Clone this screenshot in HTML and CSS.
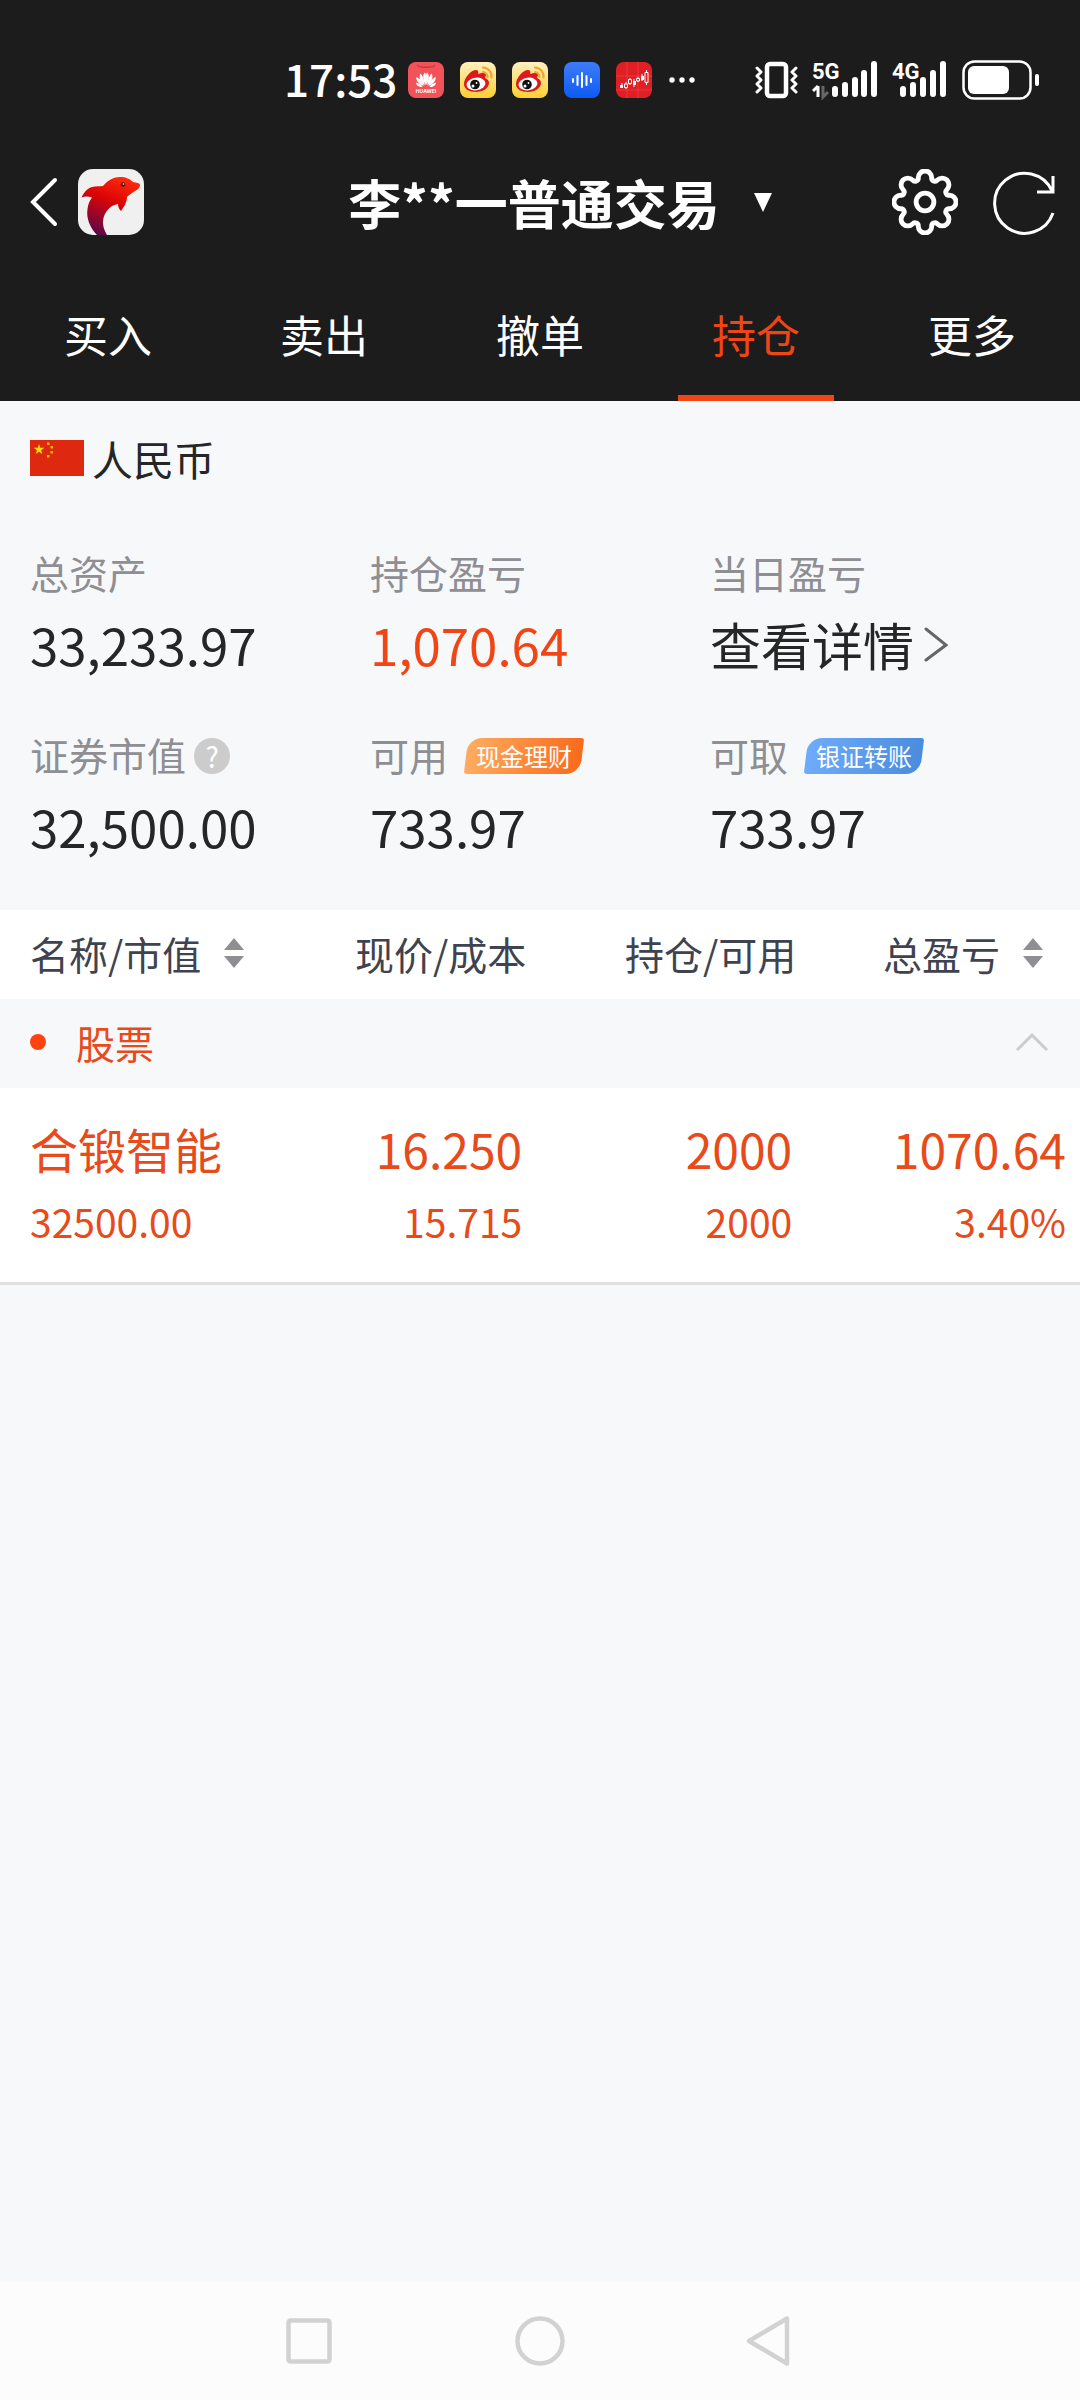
FILE: index.html
```html
<!DOCTYPE html>
<html lang="zh-CN">
<head>
<meta charset="UTF-8">
<meta name="viewport" content="width=device-width, initial-scale=1.0">
<title>持仓</title>
<link rel="stylesheet" href="styles.css">
</head>

<body>

<!-- Shared shapes -->
<svg class="defs" width="0" height="0" aria-hidden="true">
  <defs>
    <linearGradient id="weiboBg" x1="0" y1="0" x2="0" y2="1"><stop offset="0" stop-color="#fff0c0"/><stop offset="1" stop-color="#ffd030"/></linearGradient>
    <linearGradient id="blueBg" x1="0" y1="0" x2="0" y2="1"><stop offset="0" stop-color="#3d7cf8"/><stop offset="1" stop-color="#0d5bf5"/></linearGradient>
    <linearGradient id="dolphin" x1="0.7" y1="0" x2="0.3" y2="1"><stop offset="0" stop-color="#ff2a0c"/><stop offset="0.4" stop-color="#dc0505"/><stop offset="1" stop-color="#5c0748"/></linearGradient>
    <symbol id="weibo" viewBox="0 0 36 36">
      <rect width="36" height="36" rx="8" fill="url(#weiboBg)"/>
      <path d="M4 22C4 16 11 8 16 8c2 0 3 2 2 4 3-1 8-2 8 1 0 1-1 2-1 3 3 1 4 3 4 5 0 5-6 9-13 9S4 27 4 22Z" fill="#dc1a1c"/>
      <ellipse cx="16" cy="22" rx="9.5" ry="6.3" fill="#fff" transform="rotate(-8 16 22)"/>
      <circle cx="15" cy="22.5" r="4.8" fill="#111"/>
      <circle cx="13" cy="24" r="1.5" fill="#fff"/>
      <circle cx="16.5" cy="21" r="0.9" fill="#fff"/>
      <path d="M23 5.500a9 9 0 0 1 8.500 10M23 10a5 5 0 0 1 4.500 5" fill="none" stroke="#f0a52c" stroke-width="2.200" stroke-linecap="round"/>
    </symbol>
    <symbol id="sort" viewBox="0 0 22 32">
      <path d="M11 1 21 13H1ZM11 31 21 19H1Z" fill="#8e8e93"/>
    </symbol>
  </defs>
</svg>

<div class="top">
  <div class="status-bar">
    <span class="time">17:53</span>
    <div class="notices">
      <svg width="36" height="36" viewBox="0 0 36 36">
        <rect width="36" height="36" rx="8" fill="#f2525a"/>
        <path d="M9 3c2 3 16 3 18 0" fill="none" stroke="#c9343c" stroke-width="1.300"/>
        <g fill="#fff">
          <path d="M17.600 23C14.500 18 14.500 12 17 10.500 18.500 13 18.300 18 17.600 23Z"/>
          <path d="M16.500 23.500C12 20 10.500 14 12.500 11.500 15 14 16.500 19 16.500 23.500Z"/>
          <path d="M15.500 24C11 22.500 7.500 18 8.500 15 12 16.500 15 20.500 15.500 24Z"/>
          <path d="M14.500 25C10 25.500 8 22.500 8 20.500 11 21 13.500 23 14.500 25Z"/>
          <path d="M18.400 23C21.500 18 21.500 12 19 10.500 17.500 13 17.700 18 18.400 23Z"/>
          <path d="M19.500 23.500C24 20 25.500 14 23.500 11.500 21 14 19.500 19 19.500 23.500Z"/>
          <path d="M20.500 24C25 22.500 28.500 18 27.500 15 24 16.500 21 20.500 20.500 24Z"/>
          <path d="M21.500 25C26 25.500 28 22.500 28 20.500 25 21 22.500 23 21.500 25Z"/>
        </g>
        <text x="18" y="31" class="huawei">HUAWEI</text>
      </svg>
      <svg width="36" height="36"><use href="#weibo"/></svg>
      <svg width="36" height="36"><use href="#weibo"/></svg>
      <svg width="36" height="36" viewBox="0 0 36 36">
        <rect width="36" height="36" rx="8" fill="url(#blueBg)"/>
        <path d="M9 17v3M13.500 14v9M18 11v14M22.500 14v9M27 17v3" stroke="#fff" stroke-width="2" stroke-linecap="round"/>
      </svg>
      <svg width="36" height="36" viewBox="0 0 36 36">
        <rect width="36" height="36" rx="8" fill="#e01f24"/>
        <path d="M11 0v36M22 0v36M0 14h36M0 28h36" stroke="#ee4a4a" stroke-width="0.600"/>
        <path d="M6 21v5M10 20v7M14 16v7M18 17v8M22 15v5M26 12v7M30.500 8v15" stroke="#fff" stroke-width="1"/>
        <path d="M4 23h3v3H4ZM17 19h3v4h-3ZM25 14h3v4h-3Z" fill="#fff"/>
        <path d="M8.500 22h3v3.500h-3ZM12.500 17.500h3v4h-3ZM20.500 16.500h3v2.500h-3ZM29 10.500h3v10h-3Z" fill="#e01f24" stroke="#fff"/>
      </svg>
      <svg width="28" height="36" viewBox="0 0 28 36" fill="#fff"><circle cx="4" cy="18" r="2.700"/><circle cx="14" cy="18" r="2.700"/><circle cx="24" cy="18" r="2.700"/></svg>
    </div>
    <div class="signals">
      <svg width="46" height="40" viewBox="0 0 46 40" fill="none" stroke="#fff">
        <rect x="13" y="4" width="19" height="32" rx="3" stroke-width="4.500"/>
        <path d="M3 8l4 4-4 4 4 4-4 4 4 4-4 4M42 8l-4 4 4 4-4 4 4 4-4 4 4 4" stroke-width="3" stroke-linecap="round" stroke-linejoin="round"/>
      </svg>
      <svg width="68" height="40" viewBox="0 0 68 40">
        <text x="0" y="19" class="net">5G</text>
        <path d="M6 26v11M6 26l-5 5" stroke="#fff" stroke-width="3" fill="none"/>
        <path d="M11 26v11l5-5" stroke="#666" stroke-width="3" fill="none"/>
        <path d="M23 29v5M33 25v9M43 20v14M52 13v21M62 4v30" stroke="#fff" stroke-width="6" stroke-linecap="round"/>
      </svg>
      <svg width="58" height="40" viewBox="0 0 58 40">
        <text x="0" y="19" class="net">4G</text>
        <path d="M11 29v5M21 25v9M31 20v14M41 13v21M51 4v30" stroke="#fff" stroke-width="6" stroke-linecap="round"/>
      </svg>
      <svg width="78" height="40" viewBox="0 0 78 40">
        <rect x="1.500" y="1.500" width="67" height="37" rx="11" fill="none" stroke="#fff" stroke-width="2.500"/>
        <rect x="6" y="6" width="41" height="28" rx="6" fill="#fff"/>
        <rect x="73" y="14" width="4" height="12" rx="2" fill="#fff"/>
      </svg>
    </div>
  </div>

  <header class="nav">
    <div class="nav-left">
      <button class="icon-btn" aria-label="返回">
        <svg width="28" height="50" viewBox="0 0 28 50" fill="none" stroke="#fff" stroke-width="4" stroke-linecap="round"><path d="M25 3 3 25 25 47"/></svg>
      </button>
      <svg width="66" height="66" viewBox="0 0 66 66">
        <rect width="66" height="66" rx="15" fill="#f0f0f0"/>
        <path d="M19 66C12 59 8 49 9.500 40 10 35 12 31 14 28.500 10 27 7 27 3.500 28.500 6 23 10 19 14 18 18 17 22 17.500 25 17 30 11 36 8 42 8c6 0 10 2 13 5 3 .500 7 1 7 3 0 3-3 5-5 6-3 2-6 4-8 6 0 5-3 10-6 14-2-2-3-4-3-7C32 36 27 43 25.500 49 24 55 26 61 29 66Z" fill="url(#dolphin)"/>
        <circle cx="45" cy="15.500" r="2.300" fill="#501014"/><circle cx="45.500" cy="15" r="0.800" fill="#fff"/>
      </svg>
    </div>
    <button class="title">李**一普通交易
      <svg width="18" height="20" viewBox="0 0 18 20" fill="#fff"><path d="M0 1h18L9 20Z"/></svg>
    </button>
    <div class="nav-right">
      <button class="icon-btn" aria-label="设置">
        <svg width="66" height="66" viewBox="-30.500 -30.500 61 61" fill="none" stroke="#fff" stroke-width="4.500">
          <path d="M-6.200-22.500A6.200 6.200 0 0 1 6.200-22.500A3 3 0 0 0 11.500-20.300A6.200 6.200 0 0 1 20.300-11.500A3 3 0 0 0 22.500-6.200A6.200 6.200 0 0 1 22.500 6.200A3 3 0 0 0 20.300 11.500A6.200 6.200 0 0 1 11.500 20.300A3 3 0 0 0 6.200 22.500A6.200 6.200 0 0 1-6.200 22.500A3 3 0 0 0-11.500 20.300A6.200 6.200 0 0 1-20.300 11.500A3 3 0 0 0-22.500 6.200A6.200 6.200 0 0 1-22.500-6.200A3 3 0 0 0-20.300-11.500A6.200 6.200 0 0 1-11.500-20.300A3 3 0 0 0-6.200-22.500Z"/>
          <circle r="8.200"/>
        </svg>
      </button>
      <button class="icon-btn" aria-label="刷新">
        <svg width="64" height="66" viewBox="0 0 64 66" fill="none" stroke="#fff" stroke-width="3">
          <path d="M61 44A30 30 0 1 1 60 22M45 23h16V7"/>
        </svg>
      </button>
    </div>
  </header>

  <nav class="tabs">
    <a href="#">买入</a>
    <a href="#">卖出</a>
    <a href="#">撤单</a>
    <a href="#" class="active">持仓</a>
    <a href="#">更多</a>
  </nav>
</div>

<main>
  <div class="currency">
    <svg width="54" height="36" viewBox="0 0 54 36">
      <rect width="54" height="36" fill="#de2910"/>
      <path d="M9 4l1.300 3.800h4L11.100 10.200l1.200 3.800L9 11.700 5.700 14l1.200-3.800L3.700 7.800h4Z" fill="#ffde00"/>
      <path d="M17 2.500h2.500V5H17ZM20.500 6H23v2.500h-2.500ZM20.500 11H23v2.500h-2.500ZM17 15h2.500v2.500H17Z" fill="#e8b800"/>
    </svg>
    <span>人民币</span>
  </div>

  <section class="assets">
    <div class="asset">
      <div class="label">总资产</div>
      <div class="value">33,233.97</div>
    </div>
    <div class="asset">
      <div class="label">持仓盈亏</div>
      <div class="value up">1,070.64</div>
    </div>
    <div class="asset">
      <div class="label">当日盈亏</div>
      <a href="#" class="value">查看详情
        <svg width="24" height="36" viewBox="0 0 24 36" fill="none" stroke="#666" stroke-width="3" stroke-linecap="round"><path d="M2 3 22 19 2 34"/></svg>
      </a>
    </div>
    <div class="asset">
      <div class="label">证券市值 <button class="help" aria-label="说明">?</button></div>
      <div class="value">32,500.00</div>
    </div>
    <div class="asset">
      <div class="label">可用 <button class="badge orange">现金理财</button></div>
      <div class="value">733.97</div>
    </div>
    <div class="asset">
      <div class="label">可取 <button class="badge blue">银证转账</button></div>
      <div class="value">733.97</div>
    </div>
  </section>

  <table class="holdings">
    <colgroup><col class="c-name"><col class="c-price"><col class="c-count"><col></colgroup>
    <thead>
      <tr>
        <th><button class="sort">名称/市值 <svg width="22" height="32"><use href="#sort"/></svg></button></th>
        <th>现价/成本</th>
        <th>持仓/可用</th>
        <th><button class="sort">总盈亏 <svg width="22" height="32"><use href="#sort"/></svg></button></th>
      </tr>
    </thead>
    <tbody>
      <tr class="group">
        <td colspan="4">
          <button class="group-btn">
            <span class="dot"></span>股票
            <svg width="32" height="20" viewBox="0 0 32 20" fill="none" stroke="#ccc" stroke-width="3"><path d="M1 18 16 3 31 18"/></svg>
          </button>
        </td>
      </tr>
      <tr class="stock">
        <td><div class="main-line">合锻智能</div><div class="sub-line">32500.00</div></td>
        <td><div class="main-line">16.250</div><div class="sub-line">15.715</div></td>
        <td><div class="main-line">2000</div><div class="sub-line">2000</div></td>
        <td><div class="main-line">1070.64</div><div class="sub-line">3.40%</div></td>
      </tr>
    </tbody>
  </table>
</main>

<footer class="system-nav">
  <button class="icon-btn" aria-label="最近任务">
    <svg width="50" height="52" viewBox="0 0 50 52" fill="none" stroke="#d2d2d2" stroke-width="4.500"><rect x="4.500" y="5.500" width="41" height="41" rx="2"/></svg>
  </button>
  <button class="icon-btn" aria-label="主页">
    <svg width="50" height="52" viewBox="0 0 50 52" fill="none" stroke="#d2d2d2" stroke-width="4.500"><circle cx="25" cy="26" r="22.500"/></svg>
  </button>
  <button class="icon-btn" aria-label="返回">
    <svg width="50" height="52" viewBox="0 0 50 52" fill="none" stroke="#d2d2d2" stroke-width="4.500" stroke-linejoin="round"><path d="M41 3.500v45L3 26Z"/></svg>
  </button>
</footer>

</body>
</html>
```

FILE: styles.css
```css
* { margin: 0; padding: 0; box-sizing: border-box; }
body { font-family: 'Noto Sans CJK SC', sans-serif; background-color: #f7f8fa; color: #262626; min-height: 100vh; display: flex; flex-direction: column; }
button { font: inherit; color: inherit; background: none; border: none; cursor: pointer; }
a { color: inherit; text-decoration: none; }
svg { display: block; flex-shrink: 0; }
.defs { position: absolute; }
main { flex: 1; }

/* Dark top area */
.top { background-color: #1c1c1c; color: #fff; }
.status-bar { display: flex; align-items: center; height: 134px; padding: 26px 40px 0 284px; }
.time { font-size: 44px; font-weight: 500; line-height: 48px; padding-bottom: 4px; }
.notices { display: flex; gap: 16px; margin-left: 11px; }
.signals { display: flex; align-items: center; gap: 12px; margin-left: auto; }
.huawei { font-family: 'Inter', sans-serif; font-size: 5px; font-weight: 700; fill: #fff; text-anchor: middle; }
.net { font-family: 'Roboto', sans-serif; font-size: 22px; font-weight: 700; fill: #fff; }

.nav { display: grid; grid-template-columns: 1fr auto 1fr; align-items: center; height: 136px; padding: 0 24px 0 30px; }
.nav-left { display: flex; align-items: center; gap: 20px; }
.nav-right { display: flex; align-items: center; justify-content: flex-end; gap: 34px; }
.title { display: flex; align-items: center; gap: 34px; padding-left: 34px; font-size: 53px; font-weight: 700; line-height: 64px; }

.tabs { display: flex; height: 131px; }
.tabs a { flex: 1; display: flex; flex-direction: column; align-items: center; font-size: 44px; line-height: 64px; padding-top: 32px; }
.tabs .active { color: #f04515; }
.tabs .active::after { content: ''; width: 72%; height: 6px; margin-top: auto; background-color: #f04515; }

/* Account summary */
.currency { display: flex; align-items: center; gap: 8px; padding: 27px 30px 0; font-size: 41px; line-height: 60px; }
.assets { display: grid; grid-template-columns: repeat(3, 340fr) 30fr; padding: 56px 0 40px 30px; row-gap: 38px; }
.asset:nth-child(3n + 1) { grid-column: 1; }
.label { display: flex; align-items: center; height: 56px; font-size: 39px; color: #8e8e93; }
.value { display: flex; align-items: center; gap: 10px; height: 88px; font-size: 51px; }
.up { color: #f04515; }
.help, .badge { height: 36px; margin-top: 4px; color: #fff; line-height: 34px; }
.help { width: 36px; margin-left: 8px; border-radius: 50%; background-color: #ccc; font-size: 28px; }
.badge { position: relative; z-index: 0; width: 120px; margin-left: 16px; font-size: 24px; }
.badge::before { content: ''; position: absolute; z-index: -1; inset: 0 2px; border-radius: 14px 3px; transform: skewX(-7deg); }
.orange::before { background: linear-gradient(90deg, #ffac60, #f96a1c); }
.blue::before { background: linear-gradient(90deg, #6fabfb, #4a8cdd); }

/* Holdings table */
.holdings { width: 100%; border-collapse: collapse; table-layout: fixed; }
.c-name { width: 26%; }
.c-price { width: 23%; }
.c-count { width: 25%; }
.holdings th, .holdings td { text-align: right; white-space: nowrap; }
.holdings th:first-child, .holdings td:first-child { text-align: left; padding-left: 30px; }
thead { background-color: #fff; color: #3f4350; }
th { height: 89px; padding: 0 3px 4px 0; font-size: 39px; font-weight: 400; }
th:last-child { padding-right: 36px; }
.sort { display: inline-flex; align-items: center; gap: 22px; }
.group td { height: 89px; padding-bottom: 3px; color: #e84a1a; font-size: 39px; }
.group-btn { display: flex; align-items: center; width: 100%; padding-right: 32px; }
.group-btn svg { margin-left: auto; }
.dot { width: 16px; height: 16px; margin-right: 30px; border-radius: 50%; background-color: #ff4210; }
.stock { background-color: #fff; color: #e84a1a; border-bottom: 3px solid #dfdfdf; }
.stock td { padding: 22px 7px 26px 0; }
.stock td:last-child { padding-right: 14px; }
.main-line { font-size: 48px; line-height: 76px; }
.sub-line { font-size: 39px; line-height: 70px; }

.system-nav { display: flex; justify-content: center; align-items: center; gap: 181px; height: 118px; background-color: #fcfcfc; }
```
